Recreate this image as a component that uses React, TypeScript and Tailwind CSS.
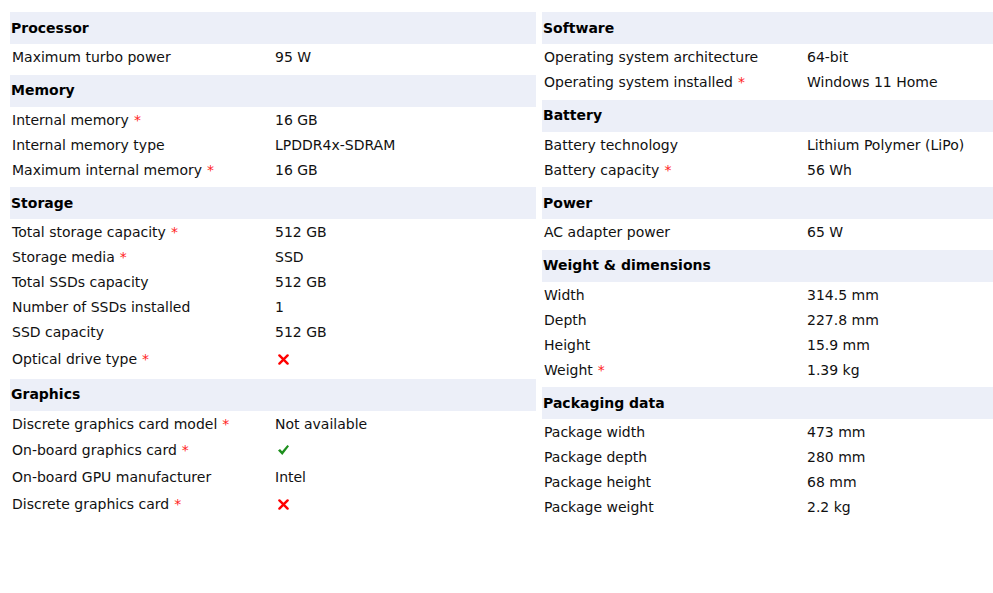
type Row = { label: string; value: string; req?: boolean };
type Section = { title: string; rows: Row[] };

const left: Section[] = [
  { title: "Processor", rows: [{ label: "Maximum turbo power", value: "95 W" }] },
  {
    title: "Memory",
    rows: [
      { label: "Internal memory", value: "16 GB", req: true },
      { label: "Internal memory type", value: "LPDDR4x-SDRAM" },
      { label: "Maximum internal memory", value: "16 GB", req: true },
    ],
  },
  {
    title: "Storage",
    rows: [
      { label: "Total storage capacity", value: "512 GB", req: true },
      { label: "Storage media", value: "SSD", req: true },
      { label: "Total SSDs capacity", value: "512 GB" },
      { label: "Number of SSDs installed", value: "1" },
      { label: "SSD capacity", value: "512 GB" },
      { label: "Optical drive type", value: "no", req: true },
    ],
  },
  {
    title: "Graphics",
    rows: [
      { label: "Discrete graphics card model", value: "Not available", req: true },
      { label: "On-board graphics card", value: "yes", req: true },
      { label: "On-board GPU manufacturer", value: "Intel" },
      { label: "Discrete graphics card", value: "no", req: true },
    ],
  },
];

const right: Section[] = [
  {
    title: "Software",
    rows: [
      { label: "Operating system architecture", value: "64-bit" },
      { label: "Operating system installed", value: "Windows 11 Home", req: true },
    ],
  },
  {
    title: "Battery",
    rows: [
      { label: "Battery technology", value: "Lithium Polymer (LiPo)" },
      { label: "Battery capacity", value: "56 Wh", req: true },
    ],
  },
  { title: "Power", rows: [{ label: "AC adapter power", value: "65 W" }] },
  {
    title: "Weight & dimensions",
    rows: [
      { label: "Width", value: "314.5 mm" },
      { label: "Depth", value: "227.8 mm" },
      { label: "Height", value: "15.9 mm" },
      { label: "Weight", value: "1.39 kg", req: true },
    ],
  },
  {
    title: "Packaging data",
    rows: [
      { label: "Package width", value: "473 mm" },
      { label: "Package depth", value: "280 mm" },
      { label: "Package height", value: "68 mm" },
      { label: "Package weight", value: "2.2 kg" },
    ],
  },
];

const Value = ({ v }: { v: string }) => {
  if (v === "yes")
    return (
      <svg width="11" height="10" viewBox="0 0 11 10" className="mt-[5px] ml-[3px]">
        <path d="M0 5.6 L2 3.9 L4.1 6.2 L9.4 0 L11 1.2 L4.3 10 Z" fill="#1d8f1d" />
      </svg>
    );
  if (v === "no")
    return (
      <svg width="11" height="11" viewBox="0 0 11 11" className="mt-[5px] ml-[3px]">
        <path d="M1.4 1.4 L9.6 9.6 M9.6 1.4 L1.4 9.6" stroke="#f00" strokeWidth="2.4" strokeLinecap="round" />
      </svg>
    );
  return <span>{v}</span>;
};

const Spec = ({ s }: { s: Section }) => (
  <div>
    <div className="h-[32px] flex items-center bg-[#eceff8] pl-px font-bold text-black">{s.title}</div>
    <div className="pt-[3px] pb-[2.5px]">
      {s.rows.map((r) => (
        <div
          key={r.label}
          className={`flex items-start leading-[21px] ${
            r.value === "no" ? "h-[29px] pt-[2px]" : r.value === "yes" ? "h-[28px] pt-[1px]" : "h-[25px]"
          }`}
        >
          <div className="w-1/2 pl-[2px]">
            {r.label}
            {r.req && <span className="text-[#f22] ml-[5px]">*</span>}
          </div>
          <div className="w-1/2 pl-[2px]">
            <Value v={r.value} />
          </div>
        </div>
      ))}
    </div>
  </div>
);

export default function App() {
  return (
    <div
      className="w-[993px] h-[593px] overflow-hidden bg-white text-[14px] text-[#111]"
      style={{ fontFamily: '"DejaVu Sans", sans-serif' }}
    >
      <div className="flex gap-[6px] pt-[12px] pl-[10px]">
        <div className="w-[526px] shrink-0">
          {left.map((s) => (
            <Spec key={s.title} s={s} />
          ))}
        </div>
        <div className="w-[526px] shrink-0">
          {right.map((s) => (
            <Spec key={s.title} s={s} />
          ))}
        </div>
      </div>
    </div>
  );
}
